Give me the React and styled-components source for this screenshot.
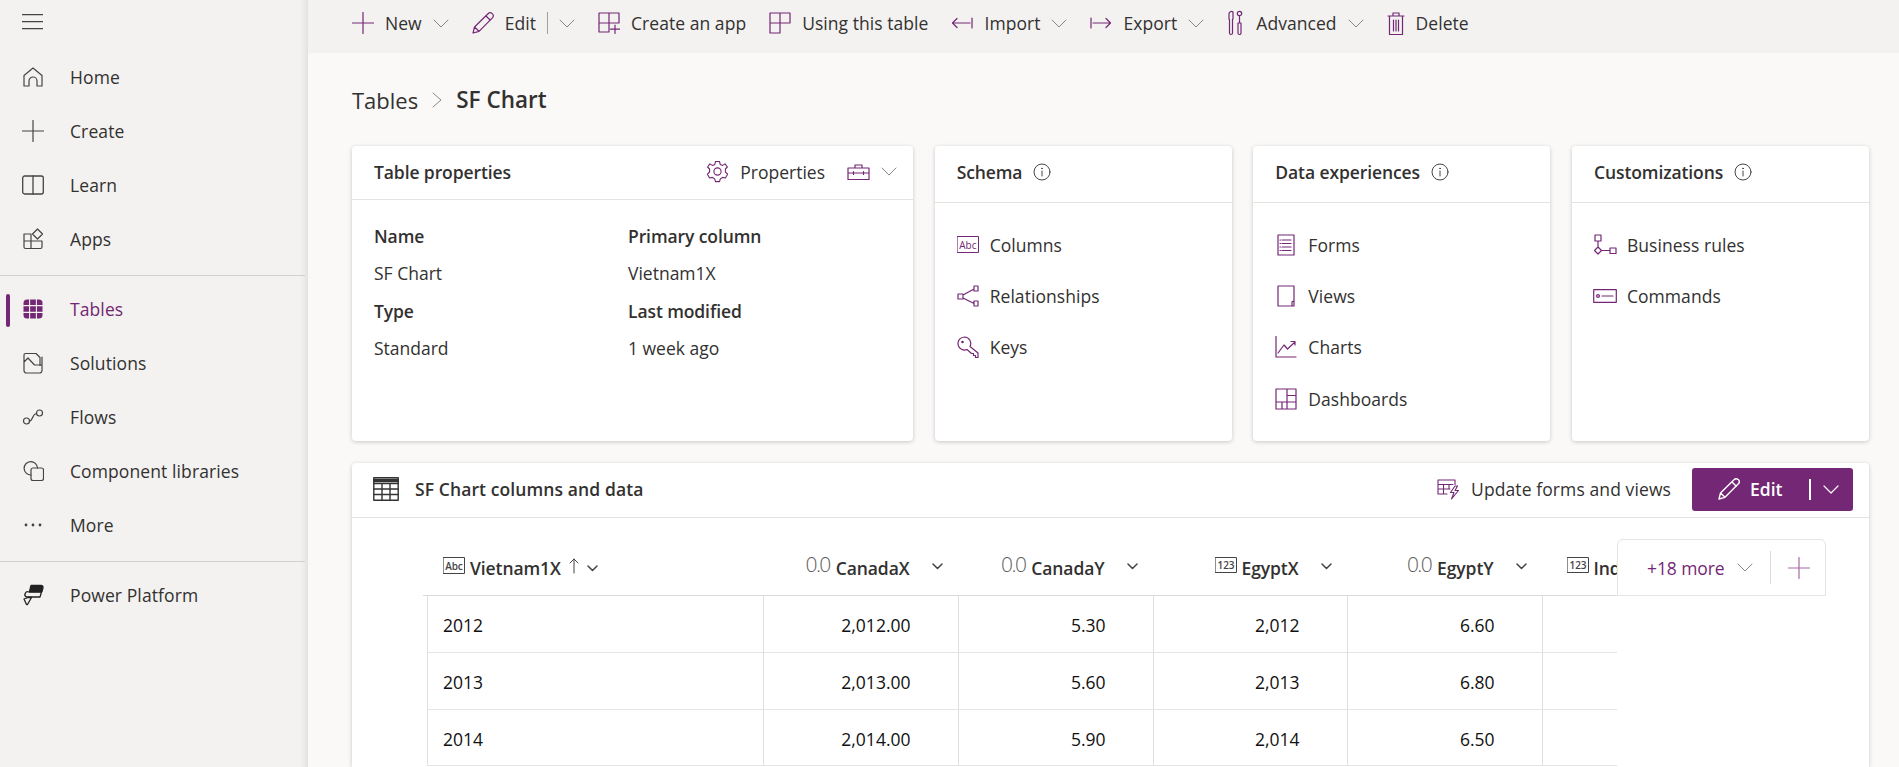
import React from "react";
import styled, { createGlobalStyle } from "styled-components";

const PURPLE = "#742774";
const INK = "#323130";

const Global = createGlobalStyle`
  html, body { margin: 0; padding: 0; height: 100%; overflow: hidden; background: #faf9f8; }
  #root { height: 100%; }
  * { box-sizing: border-box; }
  body { font-family: "Open Sans", "Noto Sans", sans-serif; color: ${INK}; }
`;

const Page = styled.div`display: flex; height: 767px; width: 1899px; overflow: hidden;`;

/* ---------- sidebar ---------- */
const Sidebar = styled.aside`
  width: 308px; flex: none; background: #f3f2f1;
  box-shadow: inset -10px 0 10px -10px rgba(0,0,0,.14);
`;
const MenuRow = styled.div`height: 44px; padding: 14px 0 0 22px; margin-bottom: 6px; display: flex;`;
const NavGroup = styled.nav`display: flex; flex-direction: column;`;
const NavItem = styled.div`
  position: relative; height: 54px; display: flex; align-items: center; padding-left: 22px;
  color: ${p => (p.$active ? PURPLE : INK)};
  &::before {
    content: ""; display: ${p => (p.$active ? "block" : "none")};
    position: absolute; left: 6px; top: 12px; width: 4px; height: 33px; border-radius: 2px; background: ${PURPLE};
  }
`;
const NavIconBox = styled.span`width: 22px; height: 22px; display: flex; align-items: center; justify-content: center; flex: none;`;
const NavLabel = styled.span`margin-left: 26px; font-size: 17.5px; letter-spacing: .1px; line-height: 22px;`;
const SideDivider = styled.div`height: 1px; background: #d2d0ce; margin: 9px 3px 6px 0;`;

/* ---------- toolbar ---------- */
const Main = styled.main`flex: 1; min-width: 0; display: flex; flex-direction: column; height: 767px;`;
const Toolbar = styled.div`height: 53px; flex: none; background: #f3f2f1; display: flex; align-items: center; padding: 0 0 7px 44px; gap: 23px;`;
const ToolItem = styled.div`display: flex; align-items: center; gap: 11px; height: 30px;`;
const ToolLabel = styled.span`font-size: 17.5px; letter-spacing: .05px; color: ${INK}; white-space: nowrap;`;
const ToolSep = styled.span`width: 1px; height: 22px; background: #a19f9d; margin: 0;`;

/* ---------- content ---------- */
const Content = styled.div`flex: 1; min-height: 0; padding: 0 30px 0 44px; display: flex; flex-direction: column;`;
const Breadcrumb = styled.div`height: 93px; display: flex; align-items: center; font-size: 22px; gap: 14px;`;
const CrumbLink = styled.span`color: ${INK};`;
const CrumbCurrent = styled.span`font-weight: 600; font-size: 22.5px; color: ${INK};`;

const CardRow = styled.section`display: grid; grid-template-columns: 561px 297px 297px 297px; column-gap: 21.67px; height: 295px; flex: none;`;
const Card = styled.article`background: #fff; border-radius: 4px; box-shadow: 0 1px 4px rgba(0,0,0,.2); overflow: hidden;`;
const CardHead = styled.header`
  height: ${p => (p.$short ? 54 : 57)}px; border-bottom: 1px solid #e4e3e1;
  display: flex; align-items: center; padding: 0 ${p => (p.$short ? 16 : 22)}px ${p => (p.$short ? 2 : 5)}px 22px;
`;
const CardTitle = styled.h2`margin: 0; font-size: 17.5px; font-weight: 600; letter-spacing: -.1px; color: ${INK}; line-height: 22px;`;
const InfoBtn = styled.span`margin-left: 11px; display: flex;`;
const HeadActions = styled.div`margin-left: auto; display: flex; align-items: center;`;
const HeadLabel = styled.span`font-size: 17.5px; letter-spacing: 0; margin-left: 11px; margin-right: 22px; color: ${INK};`;

const PropGrid = styled.dl`margin: 0; padding: 18px 22px 0; display: grid; grid-template-columns: 254px 1fr; grid-template-rows: 36px 38px 38px 36px; align-items: center;`;
const PropName = styled.dt`font-size: 17.5px; font-weight: 600; letter-spacing: -.1px;`;
const PropValue = styled.dd`margin: 0; font-size: 17.5px; letter-spacing: 0;`;

const LinkList = styled.ul`list-style: none; margin: 0; padding: 16px 22px 0;`;
const LinkRow = styled.li`height: 51.4px; display: flex; align-items: center; gap: 11px; font-size: 17.5px; letter-spacing: .05px; color: ${INK};`;
const LinkIcon = styled.span`width: 22px; height: 22px; display: flex; align-items: center; justify-content: center; flex: none;`;

/* ---------- data card ---------- */
const DataCard = styled.article`
  flex: 1; margin-top: 22px; background: #fff; border-radius: 4px 4px 0 0; box-shadow: 0 1px 4px rgba(0,0,0,.2);
  display: flex; flex-direction: column; min-height: 0;
`;
const DataHead = styled.header`height: 55px; flex: none; border-bottom: 1px solid #e4e3e1; display: flex; align-items: center; padding: 0 16px 2px 21px;`;
const DataTitle = styled.h2`margin: 0 0 0 16px; font-size: 17.5px; font-weight: 600; letter-spacing: .1px; color: ${INK};`;
const UpdateAction = styled.div`margin-left: auto; display: flex; align-items: center; gap: 11px; font-size: 17.5px; letter-spacing: .1px; color: ${INK};`;
const PrimarySplit = styled.div`
  margin-left: 21px; width: 161px; height: 43px; background: ${PURPLE}; border-radius: 3px; color: #fff;
  display: flex; align-items: center; padding-left: 26px; font-size: 17.5px; font-weight: 600;
`;
const PrimaryText = styled.span`margin-left: 10px; width: 59px;`;
const PrimarySep = styled.span`width: 1.5px; height: 21px; background: #fff; margin-right: 12px;`;

const TableArea = styled.div`position: relative; flex: 1; padding: 23px 0 0 71px; min-height: 0;`;
const Table = styled.div`width: 1194px; overflow: hidden;`;
const columns = "336px 194.5px 195px 194px 195px 75.5px";
const HeadRow = styled.div`display: grid; grid-template-columns: ${columns}; height: 55px; padding-left: 4px; border-bottom: 1.5px solid #dcdbd9;`;
const HeadCell = styled.div`
  display: flex; align-items: center; overflow: hidden; white-space: nowrap;
  justify-content: ${p => (p.$left ? "flex-start" : "flex-end")};
  padding: ${p => (p.$left ? `0 0 0 ${p.$left}px` : "0 15px 0 0")};
  font-size: 17.5px; font-weight: 600; letter-spacing: -.1px; color: ${INK};
`;
const TypeTag = styled.span`margin-right: 5px; display: flex; position: relative; top: -3px;`;
const TypeNum = styled.span`margin-right: 6px; font-size: 21px; font-weight: 300; letter-spacing: -1.6px; color: #605e5c; position: relative; top: -4px;`;
const HeadChev = styled.span`display: flex; margin-left: 22px; position: relative; top: -2px;`;
const SortArrow = styled.span`display: flex; margin: 0 8px 0 8px; position: relative; top: -2px;`;
const DataRow = styled.div`display: grid; grid-template-columns: ${columns}; height: ${p => p.$h}px; margin-left: 4px; border-bottom: 1.5px solid #e6e5e3;`;
const DataCell = styled.div`
  display: flex; align-items: center; border-left: 1.5px solid #e1dfdd;
  justify-content: ${p => (p.$left ? "flex-start" : "flex-end")};
  padding: ${p => (p.$left ? "2px 0 0 15px" : "2px 47px 0 0")};
  font-size: 17.5px; color: #111;
`;
const MoreBox = styled.div`
  position: absolute; left: 1265px; top: 21px; width: 209px; height: 57px; background: #fff;
  border: 1px solid #e6e5e3; border-radius: 6px 6px 0 0; display: flex; align-items: center; padding-left: 29px;
`;
const MoreText = styled.span`font-size: 17.5px; font-weight: 500; letter-spacing: -.1px; color: ${PURPLE};`;
const MoreSep = styled.span`width: 1px; height: 33px; background: #dcdbd9; margin: 0 17px;`;
const MoreChev = styled.span`display: flex; margin-left: 13px;`;
const BriefChev = styled.span`display: flex; margin-left: 11px;`;

/* ---------- icons ---------- */
const Ico = ({ w = 22, h = 22, c = PURPLE, sw = 1.2, vb, children }) => (
  <svg width={w} height={h} viewBox={vb || `0 0 ${w} ${h}`} fill="none" stroke={c} strokeWidth={sw} strokeLinejoin="round" strokeLinecap="round" style={{ display: "block", flex: "none" }}>
    {children}
  </svg>
);
const Chevron = ({ w = 16, c = "#8a8886", sw = 1 }) => (
  <Ico w={w} h={9} c={c} sw={sw}><path d={`M1 1 L${w / 2} 8 L${w - 1} 1`} /></Ico>
);
const SmallChev = () => <Ico w={11} h={7} c="#444" sw={1.5}><path d="M1 1 L5.5 5.5 L10 1" /></Ico>;
const Hamburger = () => (
  <Ico w={21} h={16} c="#444" sw={1.3}><path d="M0 .7H21M0 7.7H21M0 14.7H21" /></Ico>
);
const HomeI = () => <Ico c="#444"><path d="M2 20 V9.5 L11 2 L20 9.5 V20 H15 V15 a4 4 0 0 0 -8 0 V20 Z" /></Ico>;
const PlusI = ({ c = "#444", sw = 1.2 }) => <Ico c={c} sw={sw}><path d="M11 0.5V21.5M0.5 11H21.5" /></Ico>;
const BookI = () => <Ico c="#444" sw={1.3}><rect x=".7" y="2" width="20.6" height="18" rx="2" /><path d="M11 2V20" /></Ico>;
const AppsI = () => <Ico c="#444"><path d="M2 6 H9 V13 H2 Z M2 13 H9 V20.5 H3.5 A1.5 1.5 0 0 1 2 19 Z M9 13 H20 V19 A1.5 1.5 0 0 1 18.5 20.5 H9 Z" /><path d="M15.5 1 L20.5 6 L15.5 11 L10.5 6 Z" /></Ico>;
const TablesI = () => (
  <Ico c={PURPLE}><rect x="1.5" y="1.5" width="19" height="19" rx="3.5" fill={PURPLE} stroke="none" />
    <path d="M7.6 1.5V20.5M14.4 1.5V20.5M1.5 7.6H20.5M1.5 14.4H20.5" stroke="#f3f2f1" strokeWidth="1.1" /></Ico>
);
const SolutionsI = () => <Ico c="#444"><path d="M2 18.5 V3 A1.5 1.5 0 0 1 3.5 1.5 H14 L18 5.5 V13.5 M2 10 L6 6 L12.5 13 H20 V18.5 A2.5 2.5 0 0 1 17.5 21 H4.5 A2.5 2.5 0 0 1 2 18.5 Z M20 13 V5" /></Ico>;
const FlowsI = () => <Ico c="#444"><circle cx="4.5" cy="15" r="3" /><circle cx="17.5" cy="7" r="3" /><path d="M7.5 15 C11 15 10 8 14.5 7.5" /></Ico>;
const CompI = () => <Ico c="#444"><path d="M9 15 A6.7 6.7 0 1 1 15.5 8" /><rect x="9" y="8" width="12.5" height="12.5" rx="2" /></Ico>;
const MoreI = () => (
  <svg width="18" height="4" viewBox="0 0 18 4" fill="#444" style={{ display: "block" }}><circle cx="2" cy="2" r="1.4" /><circle cx="9" cy="2" r="1.4" /><circle cx="16" cy="2" r="1.4" /></svg>
);
const PowerI = () => (
  <Ico c="#222" sw={1.3}>
    <path d="M9 1.5 H19 A2 2 0 0 1 21 3.5 L20 7.5 H7.5 Z" fill="#222" />
    <path d="M7 8 H19.5 L18 13 H4.5 A2.5 2.5 0 0 1 7 8 Z" />
    <path d="M2 15 L6 13.5 H9.5 L5.5 20.5 H4.5 L2 15 Z" />
  </Ico>
);
const PencilI = ({ c = PURPLE, sw = 1.2 }) => (
  <Ico c={c} sw={sw}><path d="M1 21 L2.5 15 L16 1.8 A2.6 2.6 0 0 1 20.4 5.8 L7 19.3 Z M2.5 15 L7 19.3 M14 4 L18.3 8.2" /></Ico>
);
const NewAppI = () => <Ico><path d="M1 1 H21 V11 H1 Z M11 1 V20 H1 V1 M17 13 V21.5 M12.5 17.2 H21.5" /></Ico>;
const UsingI = () => <Ico><path d="M1 1 H21 V11 H11 V21 H1 Z M11 1 V11 H1" /></Ico>;
const ImportI = () => <Ico h={12} vb="0 0 22 12"><path d="M21 1 V11 M19 6 H2 M6 1.5 L1.5 6 L6 10.5" /></Ico>;
const ExportI = () => <Ico h={12} vb="0 0 22 12"><path d="M1 1 V11 M3 6 H20 M16 1.5 L20.5 6 L16 10.5" /></Ico>;
const AdvI = () => (
  <Ico w={18} h={26}><path d="M2 4 A2.5 2.5 0 0 1 6 2 V9 L5.5 9.5 V23 A1.5 1.5 0 0 1 2.5 23 V9.5 L2 9 Z" /><circle cx="12.5" cy="3.5" r="2.2" /><path d="M12.5 6 V13 M11 13 H14 V23 A1.5 1.5 0 0 1 11 23 Z" /></Ico>
);
const TrashI = () => (
  <Ico w={18} h={25}><path d="M1 5 H17 M2.5 5 V23.5 H15.5 V5 M6 5 V2 H12 V5 M6.5 9 V20 M9 9 V20 M11.5 9 V20" /></Ico>
);
const GearI = () => (
  <Ico w={23} h={23} sw={1.1}>
    <circle cx="11.5" cy="11.5" r="3.6" />
    <path d="M9.5 1.5 H13.5 L14.2 4.4 L16.6 5.4 L19.1 3.9 L21.4 7 L19.4 9 V12 L21.6 14.2 L19.4 18 L16.6 17.4 L14.3 19 L13.5 21.6 H9.5 L8.7 19 L6.4 17.4 L3.6 18 L1.4 14.2 L3.6 12 V9 L1.6 7 L3.9 3.9 L6.4 5.4 L8.8 4.4 Z" />
  </Ico>
);
const BriefI = () => <Ico w={23} h={16}><path d="M1 4 H22 V15.5 H1 Z M8 4 V1 H15 V4 M1 9 H22 M6.5 7.5 V10.5 M16.5 7.5 V10.5" /></Ico>;
const InfoI = () => (
  <Ico w={18} h={18} c="#444" sw={1}><circle cx="9" cy="9" r="8" /><path d="M9 8 V13" /><circle cx="9" cy="5.4" r=".4" /></Ico>
);
const boxText = { fontFamily: "'Open Sans', sans-serif", fontSize: 10, stroke: "none" };
const AbcI = ({ c = PURPLE }) => (
  <Ico h={17} c={c} sw={1}><rect x=".5" y=".5" width="21" height="16" /><text x="2.2" y="12.5" fill={c} style={boxText}>Abc</text></Ico>
);
const NumI = () => (
  <Ico h={16} c="#444" sw={1}><rect x=".5" y=".5" width="21" height="15" /><text x="2.6" y="12" fill="#444" style={boxText}>123</text></Ico>
);
const RelI = () => <Ico><path d="M1 9 H6 V14 H1 Z M17 1 H21 V6 H17 Z M17 16 H21 V21 H17 Z M6 10 L17 4 M6 13 L17 18.5" /></Ico>;
const KeyI = () => <Ico><path d="M7.5 1 A6.5 6.5 0 0 1 13 10.5 L21 17 V21.5 H18.5 V19.5 H16.5 V17.5 H14.5 L10 13.5 A6.5 6.5 0 1 1 7.5 1 Z" /><circle cx="5.5" cy="6" r=".7" fill={PURPLE} /></Ico>;
const FormsI = () => <Ico><path d="M3 1 H19 V21 H3 Z M7 6 H16 M7 9.5 H16 M7 13 H16 M7 16.5 H16 M5 6 H5.5 M5 9.5 H5.5 M5 13 H5.5 M5 16.5 H5.5" /></Ico>;
const ViewsI = () => <Ico><path d="M3 1 H19 V21 H3 Z M17 21 V17 A1.2 1.2 0 0 1 19 17" /></Ico>;
const ChartsI = () => <Ico><path d="M1 0.5 V21 H21 M3 17 L9 9 L12.5 13 L20 6 M16 5.5 H20 V9" /></Ico>;
const DashI = () => <Ico><path d="M1 1 H21 V21 H1 Z M1 14 H21 M12 1 V21 M12 7.5 H21 M7 14 V21" /></Ico>;
const RulesI = () => <Ico w={24} vb="0 0 24 22"><path d="M2 1 H8 V7 H2 Z M5 7 V13 M5 13 L8.5 16.5 L5 20 L1.5 16.5 Z M8.5 16.5 H17 M17 14 H23 V19.5 H17 Z" /></Ico>;
const CmdI = () => <Ico w={24} h={14} sw={1.2}><rect x=".7" y=".7" width="22.6" height="12.6" /><circle cx="5" cy="7" r="1.4" /><path d="M9 7 H20" /></Ico>;
const GridI = () => <Ico w={26} h={24} c="#333" sw={1.4}><rect x=".8" y=".8" width="24.4" height="22.4" /><path d="M.8 6.5H25.2M.8 12H25.2M.8 17.5H25.2M9 6.5V23M17 6.5V23" /><path d="M.8 3.5H25.2" strokeWidth="3.5" /></Ico>;
const UpdateI = () => (
  <Ico w={23} h={21} sw={1.1}><path d="M18 5.5 V1 H1 V15 H10 M1 5.5 H16 M1 10 H13 M6.5 5.5 V15 M12 5.5 V10" /><path d="M18 7 L13.5 13.5 H17 L14.5 20 L21.5 11.5 H18 L20.5 7 Z" /></Ico>
);
const UpArrow = () => <Ico w={10} h={16} c="#444" sw={1}><path d="M5 15 V1 M1 5 L5 1 L9 5" /></Ico>;

/* ---------- data ---------- */
const navTop = [["Home", HomeI], ["Create", PlusI], ["Learn", BookI], ["Apps", AppsI]];
const navMid = [["Tables", TablesI, true], ["Solutions", SolutionsI], ["Flows", FlowsI], ["Component libraries", CompI], ["More", MoreI]];
const rows = [
  ["2012", "2,012.00", "5.30", "2,012", "6.60", 57],
  ["2013", "2,013.00", "5.60", "2,013", "6.80", 57],
  ["2014", "2,014.00", "5.90", "2,014", "6.50", 56],
];
const Nav = ({ items }) => (
  <NavGroup>
    {items.map(([label, I, active]) => (
      <NavItem key={label} $active={active}><NavIconBox><I /></NavIconBox><NavLabel>{label}</NavLabel></NavItem>
    ))}
  </NavGroup>
);
const Links = ({ items }) => (
  <LinkList>
    {items.map(([label, I]) => <LinkRow key={label}><LinkIcon><I /></LinkIcon>{label}</LinkRow>)}
  </LinkList>
);
const LinkCard = ({ title, items }) => (
  <Card>
    <CardHead><CardTitle>{title}</CardTitle><InfoBtn><InfoI /></InfoBtn></CardHead>
    <Links items={items} />
  </Card>
);
const Column = ({ type, name }) => (
  <HeadCell>
    {type === "num" ? <TypeTag><NumI /></TypeTag> : <TypeNum>0.0</TypeNum>}
    {name}
    <HeadChev><SmallChev /></HeadChev>
  </HeadCell>
);

export default function App() {
  return (
    <Page>
      <Global />
      <Sidebar>
        <MenuRow><Hamburger /></MenuRow>
        <Nav items={navTop} />
        <SideDivider />
        <Nav items={navMid} />
        <SideDivider />
        <Nav items={[["Power Platform", PowerI]]} />
      </Sidebar>
      <Main>
        <Toolbar>
          <ToolItem><PlusI c={PURPLE} /><ToolLabel>New</ToolLabel><Chevron /></ToolItem>
          <ToolItem><PencilI /><ToolLabel>Edit</ToolLabel><ToolSep /><Chevron /></ToolItem>
          <ToolItem><NewAppI /><ToolLabel>Create an app</ToolLabel></ToolItem>
          <ToolItem><UsingI /><ToolLabel>Using this table</ToolLabel></ToolItem>
          <ToolItem><ImportI /><ToolLabel>Import</ToolLabel><Chevron /></ToolItem>
          <ToolItem><ExportI /><ToolLabel>Export</ToolLabel><Chevron /></ToolItem>
          <ToolItem><AdvI /><ToolLabel>Advanced</ToolLabel><Chevron /></ToolItem>
          <ToolItem><TrashI /><ToolLabel>Delete</ToolLabel></ToolItem>
        </Toolbar>
        <Content>
          <Breadcrumb>
            <CrumbLink>Tables</CrumbLink>
            <Ico w={10} h={16} c="#8a8886" sw={1}><path d="M1 1 L9 8 L1 15" /></Ico>
            <CrumbCurrent>SF Chart</CrumbCurrent>
          </Breadcrumb>
          <CardRow>
            <Card>
              <CardHead $short>
                <CardTitle>Table properties</CardTitle>
                <HeadActions>
                  <GearI /><HeadLabel>Properties</HeadLabel><BriefI /><BriefChev><Chevron /></BriefChev>
                </HeadActions>
              </CardHead>
              <PropGrid>
                <PropName>Name</PropName><PropName>Primary column</PropName>
                <PropValue>SF Chart</PropValue><PropValue>Vietnam1X</PropValue>
                <PropName>Type</PropName><PropName>Last modified</PropName>
                <PropValue>Standard</PropValue><PropValue>1 week ago</PropValue>
              </PropGrid>
            </Card>
            <LinkCard title="Schema" items={[["Columns", AbcI], ["Relationships", RelI], ["Keys", KeyI]]} />
            <LinkCard title="Data experiences" items={[["Forms", FormsI], ["Views", ViewsI], ["Charts", ChartsI], ["Dashboards", DashI]]} />
            <LinkCard title="Customizations" items={[["Business rules", RulesI], ["Commands", CmdI]]} />
          </CardRow>
          <DataCard>
            <DataHead>
              <GridI />
              <DataTitle>SF Chart columns and data</DataTitle>
              <UpdateAction><UpdateI />Update forms and views</UpdateAction>
              <PrimarySplit>
                <PencilI c="#fff" sw={1.4} /><PrimaryText>Edit</PrimaryText><PrimarySep /><Chevron c="#fff" sw={1.2} />
              </PrimarySplit>
            </DataHead>
            <TableArea>
              <Table>
                <HeadRow>
                  <HeadCell $left={16}><TypeTag><AbcI c="#444" /></TypeTag>Vietnam1X<SortArrow><UpArrow /></SortArrow><SmallChev /></HeadCell>
                  <Column type="dec" name="CanadaX" />
                  <Column type="dec" name="CanadaY" />
                  <Column type="num" name="EgyptX" />
                  <Column type="dec" name="EgyptY" />
                  <HeadCell $left={25}><TypeTag><NumI /></TypeTag>IndiaX</HeadCell>
                </HeadRow>
                {rows.map(r => (
                  <DataRow key={r[0]} $h={r[5]}>
                    <DataCell $left>{r[0]}</DataCell>
                    <DataCell>{r[1]}</DataCell>
                    <DataCell>{r[2]}</DataCell>
                    <DataCell>{r[3]}</DataCell>
                    <DataCell>{r[4]}</DataCell>
                    <DataCell />
                  </DataRow>
                ))}
              </Table>
              <MoreBox>
                <MoreText>+18 more</MoreText>
                <MoreChev><Chevron /></MoreChev>
                <MoreSep />
                <PlusI c="#a56aa5" />
              </MoreBox>
            </TableArea>
          </DataCard>
        </Content>
      </Main>
    </Page>
  );
}
